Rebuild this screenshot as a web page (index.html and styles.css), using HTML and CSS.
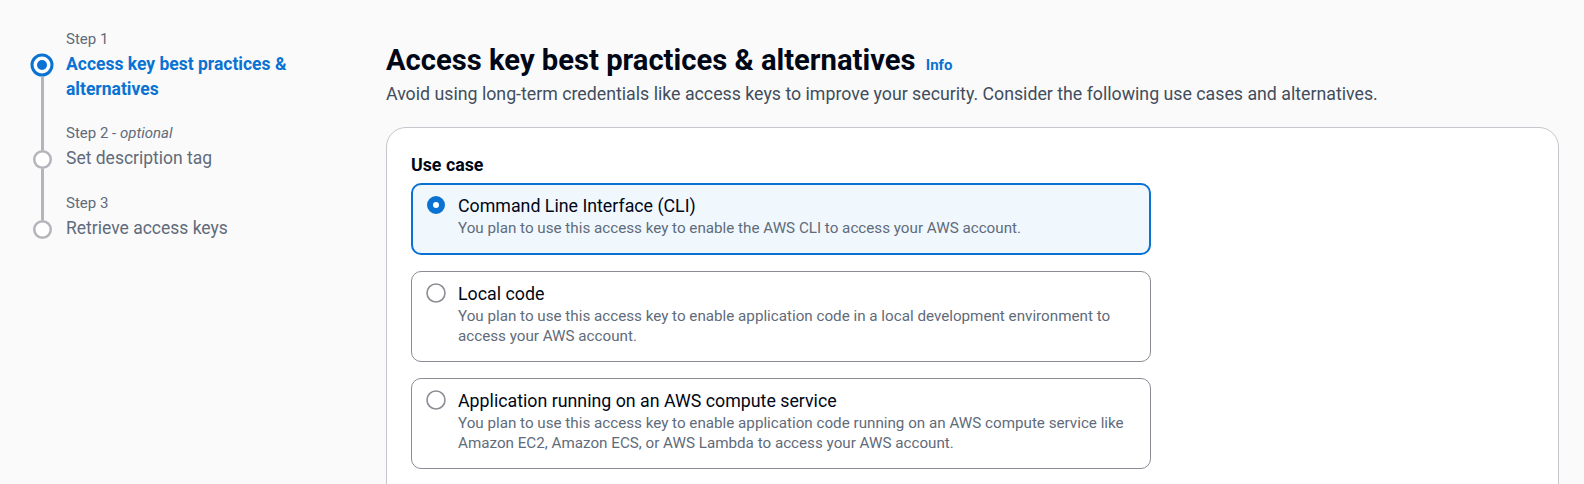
FILE: index.html
```html
<!DOCTYPE html>
<html lang="en">
<head>
<meta charset="utf-8">
<title>Create access key</title>
<link rel="stylesheet" href="styles.css">
</head>
<body>
<div class="page">
  <nav class="nav">
    <ol class="steps">
      <li class="step active first">
        <span class="rail-top"></span>
        <div class="step-label">Step 1</div>
        <div class="marker">
          <span class="seg seg-top"></span>
          <svg class="dot-active" width="24" height="24" viewBox="0 0 24 24" aria-hidden="true">
            <circle cx="12" cy="12" r="10" fill="#fff" stroke="#0972d3" stroke-width="3"/>
            <circle cx="12" cy="12" r="5" fill="#0972d3"/>
          </svg>
          <span class="seg seg-fill"></span>
        </div>
        <div class="step-title">Access key best practices &amp; alternatives</div>
      </li>
      <li class="step">
        <span class="rail-top"></span>
        <div class="step-label">Step 2 - <i>optional</i></div>
        <div class="marker">
          <span class="seg seg-top"></span>
          <svg class="dot" width="19" height="19" viewBox="0 0 19 19" aria-hidden="true">
            <circle cx="9.5" cy="9.5" r="8.25" fill="#fff" stroke="#b4b4bb" stroke-width="2.5"/>
          </svg>
          <span class="seg seg-fill"></span>
        </div>
        <div class="step-title">Set description tag</div>
      </li>
      <li class="step last">
        <span class="rail-top"></span>
        <div class="step-label">Step 3</div>
        <div class="marker">
          <span class="seg seg-top"></span>
          <svg class="dot" width="19" height="19" viewBox="0 0 19 19" aria-hidden="true">
            <circle cx="9.5" cy="9.5" r="8.25" fill="#fff" stroke="#b4b4bb" stroke-width="2.5"/>
          </svg>
          <span class="seg seg-fill"></span>
        </div>
        <div class="step-title">Retrieve access keys</div>
      </li>
    </ol>
  </nav>

  <main class="main">
    <header class="page-header">
      <h1 class="title">Access key best practices &amp; alternatives <a class="info" href="#">Info</a></h1>
      <p class="desc">Avoid using long-term credentials like access keys to improve your security. Consider the following use cases and alternatives.</p>
    </header>

    <section class="panel">
      <div class="field-label">Use case</div>
      <div class="tiles">
        <label class="tile selected">
          <svg class="radio" width="20" height="20" viewBox="0 0 100 100" aria-hidden="true">
            <circle cx="50" cy="50" r="30" fill="#fff" stroke="#0972d3" stroke-width="30"/>
          </svg>
          <span class="tile-text">
            <span class="tile-title">Command Line Interface (CLI)</span>
            <span class="tile-desc">You plan to use this access key to enable the AWS CLI to access your AWS account.</span>
          </span>
        </label>
        <label class="tile">
          <svg class="radio" width="20" height="20" viewBox="0 0 100 100" aria-hidden="true">
            <circle cx="50" cy="50" r="45" fill="#fff" stroke="#8c8c94" stroke-width="8"/>
          </svg>
          <span class="tile-text">
            <span class="tile-title">Local code</span>
            <span class="tile-desc">You plan to use this access key to enable application code in a local development environment to access your AWS account.</span>
          </span>
        </label>
        <label class="tile">
          <svg class="radio" width="20" height="20" viewBox="0 0 100 100" aria-hidden="true">
            <circle cx="50" cy="50" r="45" fill="#fff" stroke="#8c8c94" stroke-width="8"/>
          </svg>
          <span class="tile-text">
            <span class="tile-title">Application running on an AWS compute service</span>
            <span class="tile-desc">You plan to use this access key to enable application code running on an AWS compute service like Amazon EC2, Amazon ECS, or AWS Lambda to access your AWS account.</span>
          </span>
        </label>
      </div>
    </section>
  </main>
</div>
</body>
</html>
```

FILE: styles.css
```css
* { box-sizing: border-box; }

body {
  margin: 0;
  background: #fafafa;
  font-family: Roboto, "Noto Sans", "Liberation Sans", sans-serif;
  color: #000716;
}

.page {
  display: flex;
  align-items: flex-start;
}

/* ---------- wizard navigation ---------- */
.nav {
  width: 386px;
  flex-shrink: 0;
  padding: 29px 60px 0 30px;
}

.steps {
  list-style: none;
  margin: 0;
  padding: 0;
}

.step {
  display: grid;
  grid-template-columns: 24px 1fr;
  column-gap: 12px;
}

.rail-top {
  justify-self: center;
  width: 3px;
  background: #b4b4bb;
}

.first .rail-top { background: transparent; }

.step-label {
  font-size: 15px;
  line-height: 20px;
  padding-bottom: 3px;
  color: #5f6b7a;
}

.step-label i { font-style: italic; }

.marker {
  display: flex;
  flex-direction: column;
  align-items: center;
}

.seg {
  width: 3px;
  background: #b4b4bb;
  flex-shrink: 0;
}

.seg-top { height: 4px; }
.first .seg-top { height: 1px; background: transparent; }
.seg-fill { flex: 1; }
.last .seg-fill { background: transparent; }

.marker svg { display: block; flex-shrink: 0; }

.step-title {
  font-size: 17.5px;
  line-height: 25px;
  color: #5f6b7a;
  padding-bottom: 21px;
}

.step:nth-child(2) .step-title { padding-bottom: 22px; }
.last .step-title { padding-bottom: 0; }

.active .step-title {
  color: #0972d3;
  font-weight: 700;
}

/* ---------- main ---------- */
.main {
  flex: 1;
  min-width: 0;
  padding: 42px 25px 0 0;
}

.title {
  margin: 0;
  font-size: 29.2px;
  line-height: 37.5px;
  font-weight: 700;
  color: #000716;
}

.info {
  margin-left: 3px;
  font-size: 15px;
  line-height: 1;
  font-weight: 700;
  color: #0972d3;
  text-decoration: none;
}

.desc {
  margin: 2px 0 0;
  font-size: 17.75px;
  line-height: 25px;
  color: #414d5c;
}

.panel {
  margin-top: 20px;
  background: #fff;
  border: 1px solid #c6c6cd;
  border-radius: 20px;
  padding: 24px 24px 60px;
}

.field-label {
  font-size: 17.8px;
  line-height: 25px;
  font-weight: 700;
  color: #000716;
  margin-bottom: 6px;
}

.tiles {
  display: flex;
  flex-direction: column;
  gap: 16px;
  width: 740px;
}

.tile {
  display: flex;
  align-items: flex-start;
  gap: 12px;
  border: 1px solid #8c8c94;
  border-radius: 10px;
  padding: 9px 14px 15px;
  background: #fff;
}

.tile.selected {
  border: 2px solid #0972d3;
  padding: 8px 13px 15px;
  background: #f0f8fe;
}

.radio {
  display: block;
  flex-shrink: 0;
  margin-top: 2.5px;
}

.tile-text {
  display: flex;
  flex-direction: column;
}

.tile-title {
  font-size: 17.8px;
  line-height: 25px;
  color: #000716;
}

.tile-desc {
  font-size: 15.2px;
  line-height: 20px;
  color: #5f6b7a;
}
```
